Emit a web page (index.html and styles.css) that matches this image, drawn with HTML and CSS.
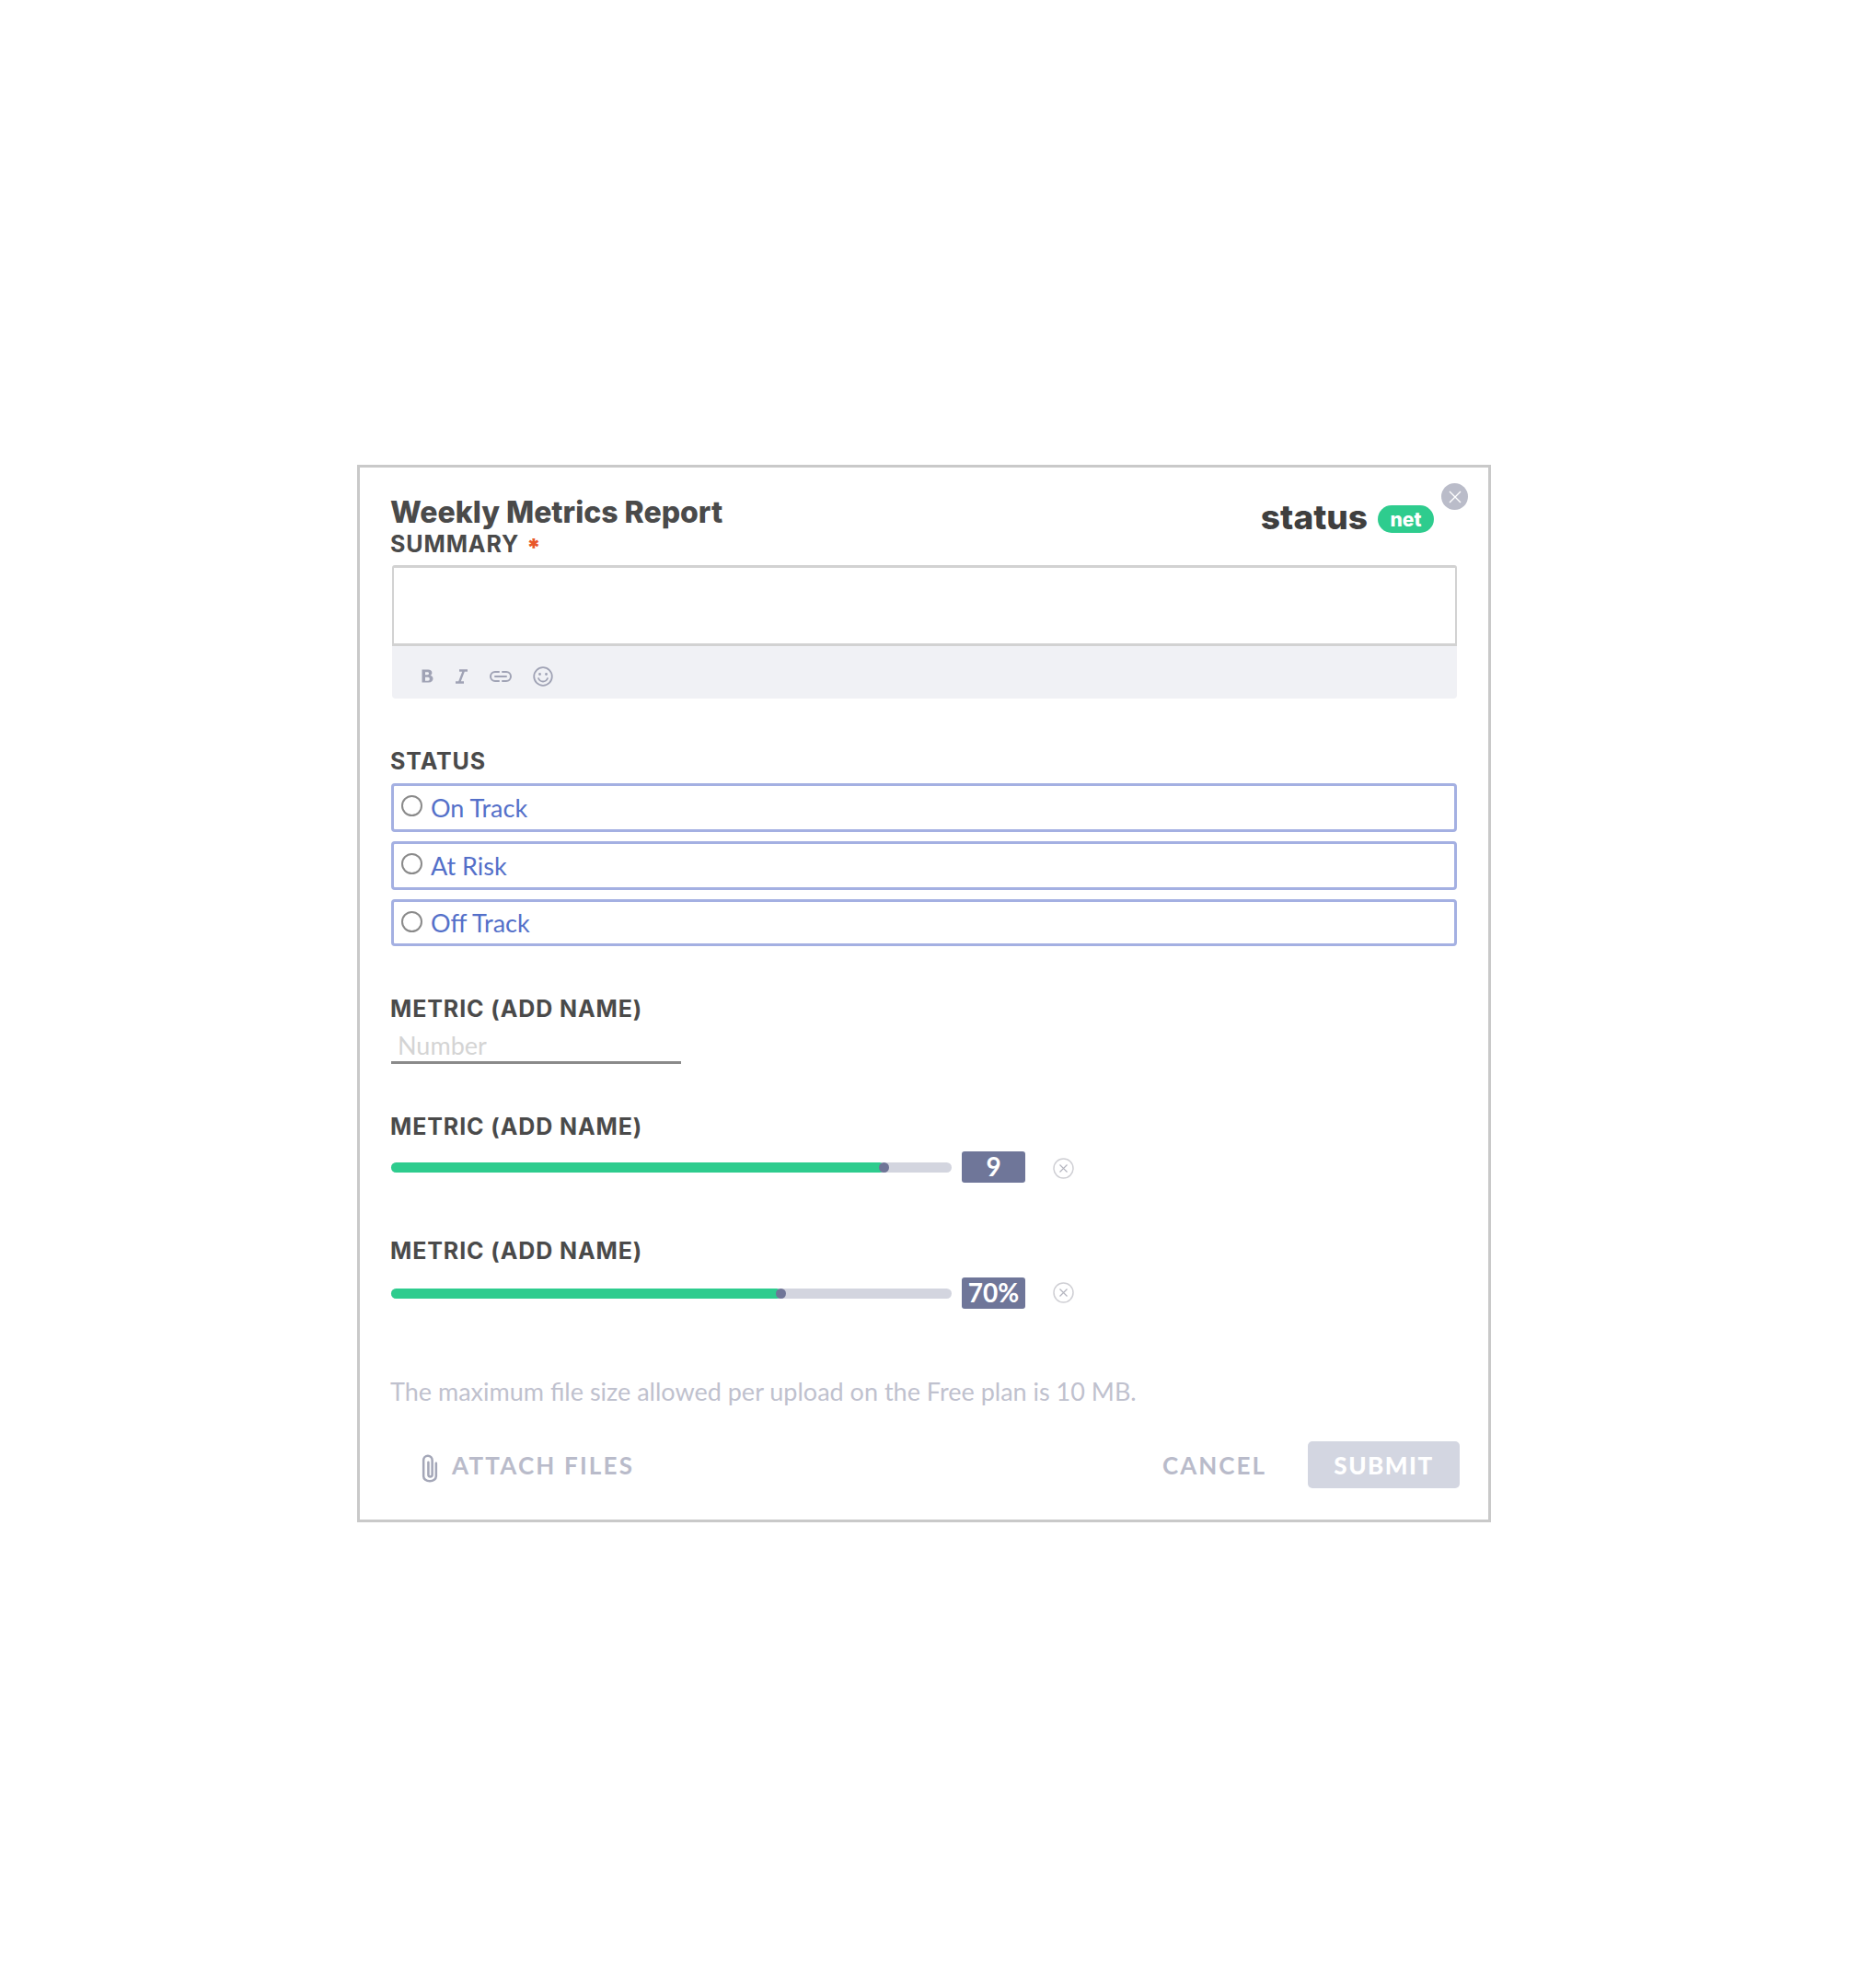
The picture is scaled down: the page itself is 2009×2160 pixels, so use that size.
FILE: index.html
```html
<!DOCTYPE html>
<html lang="en">
<head>
    <meta charset="UTF-8">
    <title>Weekly Metrics Report</title>
    <link rel="stylesheet" href="styles.css">
</head>
<body>
    <div class="card">
        <button class="close" aria-label="Close">
            <svg width="14" height="14" viewBox="0 0 14 14"><path d="M1 1l12 12M13 1L1 13" stroke="#fff" stroke-width="1.4" fill="none"/></svg>
        </button>

        <div class="header">
            <div>
                <h1 class="title">Weekly Metrics Report</h1>
                <div class="label">SUMMARY <span class="required">*</span></div>
            </div>
            <div class="logo">
                <span class="logo-name">status</span>
                <span class="logo-pill">net</span>
            </div>
        </div>

        <div class="editor"></div>
        <div class="toolbar">
            <svg width="15" height="18" viewBox="0 0 15 17"><path d="M1.500 1h6.700c2.600 0 4.200 1.300 4.200 3.400 0 1.400-.8 2.400-2 2.800 1.800.3 3.100 1.600 3.100 3.500 0 2.500-1.800 4.300-4.700 4.300H1.500zM5 3.800v2.900h2.500c1 0 1.500-.6 1.500-1.450S8.500 3.800 7.500 3.800zM5 9.300v3.900h3c1.200 0 1.800-.8 1.800-1.950S9.200 9.300 8 9.300z" fill="#a0a3b5"/></svg>
            <svg width="15" height="18" viewBox="0 0 15 17"><path d="M5 2h9M1 15h9M10 2L5 15" stroke="#a0a3b5" stroke-width="2.400" fill="none"/></svg>
            <svg width="26" height="14" viewBox="0 0 26 14"><path d="M11 2H7a5 5 0 0 0 0 10h4M15 2h4a5 5 0 0 1 0 10h-4M7 7h12" stroke="#a0a3b5" stroke-width="2" fill="none" stroke-linecap="round"/></svg>
            <svg width="22" height="22" viewBox="0 0 22 22"><circle cx="11" cy="11" r="9.800" stroke="#a0a3b5" stroke-width="1.800" fill="none"/><circle cx="7.500" cy="8.500" r="1.400" fill="#a0a3b5"/><circle cx="14.500" cy="8.500" r="1.400" fill="#a0a3b5"/><path d="M6 13c1 2.400 3 3.500 5 3.500s4-1.100 5-3.500" stroke="#a0a3b5" stroke-width="1.800" fill="none" stroke-linecap="round"/></svg>
        </div>

        <div class="label status-label">STATUS</div>
        <div class="radio-list">
            <div class="radio-row"><span class="radio"></span>On Track</div>
            <div class="radio-row"><span class="radio"></span>At Risk</div>
            <div class="radio-row short"><span class="radio"></span>Off Track</div>
        </div>

        <div class="label metric-first">METRIC (ADD NAME)</div>
        <div class="number-input">Number</div>

        <div class="label metric-second">METRIC (ADD NAME)</div>
        <div class="slider">
            <div class="track"><div class="fill" style="width: 88%"></div></div>
            <span class="value">9</span>
            <svg class="clear" width="23" height="23" viewBox="0 0 23 23"><circle cx="11.500" cy="11.500" r="10.500" stroke="#cfcfd4" stroke-width="1.500" fill="none"/><path d="M7.500 7.500l8 8M15.500 7.500l-8 8" stroke="#b4b5bf" stroke-width="1.200" fill="none"/></svg>
        </div>

        <div class="label metric-third">METRIC (ADD NAME)</div>
        <div class="slider slider-last">
            <div class="track"><div class="fill" style="width: 69.7%"></div></div>
            <span class="value">70%</span>
            <svg class="clear" width="23" height="23" viewBox="0 0 23 23"><circle cx="11.500" cy="11.500" r="10.500" stroke="#cfcfd4" stroke-width="1.500" fill="none"/><path d="M7.500 7.500l8 8M15.500 7.500l-8 8" stroke="#b4b5bf" stroke-width="1.200" fill="none"/></svg>
        </div>

        <p class="note">The maximum file size allowed per upload on the Free plan is 10 MB.</p>

        <div class="footer">
            <div class="attach">
                <svg class="clip" width="20" height="32" viewBox="0 0 19 30"><path d="M8 9v13a2 2 0 0 0 4 0V7a4.500 4.500 0 0 0-9 0v16.500a6.500 5 0 0 0 13 0V10" stroke="#a4a7b8" stroke-width="2.400" fill="none" stroke-linecap="round"/></svg>
                <span>ATTACH FILES</span>
            </div>
            <div class="actions">
                <span class="cancel">CANCEL</span>
                <span class="submit">SUBMIT</span>
            </div>
        </div>
    </div>
</body>
</html>
```

FILE: styles.css
```css
html, body {
    margin: 0;
    padding: 0;
    background-color: #ffffff;
}
body {
    font-family: "Lato", "Liberation Sans", sans-serif;
    color: #4a4a4a;
}
.card {
    position: relative;
    box-sizing: border-box;
    width: 1232px;
    height: 1149px;
    margin: 505px 0 0 388px;
    padding: 31px 34px 0 33px;
    border: 3px solid #c9c9c9;
}
.close {
    position: absolute;
    top: 17px;
    right: 22px;
    display: flex;
    justify-content: center;
    align-items: center;
    width: 29px;
    height: 29px;
    padding: 0;
    border: 0;
    border-radius: 50%;
    background-color: #babcc9;
}
.header {
    display: flex;
    justify-content: space-between;
    align-items: flex-start;
    padding-right: 25px;
}
.title {
    margin: 0;
    font-family: "Inter", "Liberation Sans", sans-serif;
    font-size: 32px;
    line-height: 36px;
    font-weight: 800;
    color: #4a4a4a;
}
.label {
    padding-top: 1px;
    font-family: "Inter", "Liberation Sans", sans-serif;
    font-size: 25px;
    line-height: 28px;
    font-weight: 700;
    letter-spacing: 0.900px;
    color: #4a4a4a;
}
.header .label {
    margin-top: 1px;
}
.required {
    margin-left: 1px;
    color: #e8562a;
    font-size: 26px;
    line-height: 0;
    font-weight: 900;
    vertical-align: -4px;
}
.logo {
    display: flex;
    align-items: center;
    gap: 11px;
    margin-top: 8px;
}
.logo-name {
    margin-bottom: 2px;
    font-family: "Inter", "Liberation Sans", sans-serif;
    font-size: 37px;
    line-height: 30px;
    font-weight: 800;
    color: #3f3f3f;
}
.logo-pill {
    display: flex;
    justify-content: center;
    align-items: center;
    width: 61px;
    height: 30px;
    margin-top: 2px;
    border-radius: 15px;
    background-color: #2ecc8e;
    color: #ffffff;
    font-family: "Inter", "Liberation Sans", sans-serif;
    font-size: 21px;
    font-weight: 800;
}
.editor {
    box-sizing: border-box;
    height: 88px;
    margin: 9px 0 0 2px;
    border: 3px solid #d2d2d2;
    border-radius: 3px 3px 0 0;
    border-left-width: 2px;
    border-right-width: 2px;
}
.toolbar {
    display: flex;
    align-items: center;
    gap: 22px;
    box-sizing: border-box;
    height: 57px;
    margin-left: 2px;
    padding: 8px 0 0 31px;
    border-radius: 0 0 4px 4px;
    background-color: #f0f1f5;
}
.status-label {
    margin-top: 53px;
}
.radio-list {
    display: flex;
    flex-direction: column;
    gap: 10px;
    margin: 10px 0 0 1px;
}
.radio-row {
    box-sizing: border-box;
    display: flex;
    align-items: center;
    height: 53px;
    padding-left: 8px;
    border: 3px solid #a4b0e2;
    border-radius: 4px;
    color: #5470c9;
    font-size: 27px;
}
.radio-row.short {
    height: 51px;
}
.radio {
    box-sizing: border-box;
    width: 23px;
    height: 23px;
    margin: -4px 9px 0 0;
    border: 2px solid #8a8a8a;
    border-radius: 50%;
}
.short .radio {
    margin-top: -2px;
}
.metric-first {
    margin-top: 53px;
}
.number-input {
    box-sizing: border-box;
    width: 315px;
    height: 46px;
    margin-left: 1px;
    padding: 10px 0 0 7px;
    border-bottom: 3px solid #8a8a8a;
    color: #d4d4d4;
    font-size: 27px;
    line-height: 32px;
}
.metric-second {
    margin-top: 53px;
}
.metric-third {
    margin-top: 59px;
}
.slider {
    display: flex;
    align-items: center;
    margin: 13px 0 0 1px;
}
.slider-last {
    margin-top: 15px;
}
.track {
    width: 609px;
    height: 11px;
    border-radius: 6px;
    background-color: #d3d5df;
}
.fill {
    position: relative;
    height: 100%;
    border-radius: 6px;
    background-color: #2ecc8e;
}
.fill::after {
    content: "";
    position: absolute;
    top: 0;
    right: -5px;
    width: 11px;
    height: 11px;
    border-radius: 50%;
    background-color: #6f7597;
}
.value {
    display: flex;
    justify-content: center;
    align-items: center;
    box-sizing: border-box;
    width: 69px;
    height: 34px;
    margin-left: 11px;
    padding-bottom: 2px;
    border-radius: 3px;
    background-color: #6f7699;
    color: #ffffff;
    font-size: 28px;
    font-weight: 700;
}
.clear {
    margin: 2px 0 0 30px;
}
.slider-last .clear {
    margin-top: -1px;
}
.note {
    margin: 76px 0 0 0;
    color: #bfc1ce;
    font-size: 27px;
    line-height: 28px;
}
.footer {
    display: flex;
    justify-content: space-between;
    align-items: center;
    margin: 40px -3px 0 0;
}
.attach {
    display: flex;
    align-items: center;
    gap: 14px;
    margin-left: 33px;
    color: #b9bbca;
    font-size: 26px;
    font-weight: 700;
    letter-spacing: 2.200px;
}
.clip {
    margin-top: 6px;
}
.actions {
    display: flex;
    align-items: center;
    gap: 45px;
}
.cancel {
    color: #b9bbca;
    font-size: 26px;
    font-weight: 700;
    letter-spacing: 2px;
}
.submit {
    display: flex;
    justify-content: center;
    align-items: center;
    width: 165px;
    height: 51px;
    border-radius: 5px;
    background-color: #d3d6e1;
    color: #ffffff;
    font-size: 26px;
    font-weight: 900;
    letter-spacing: 1.500px;
}
```
